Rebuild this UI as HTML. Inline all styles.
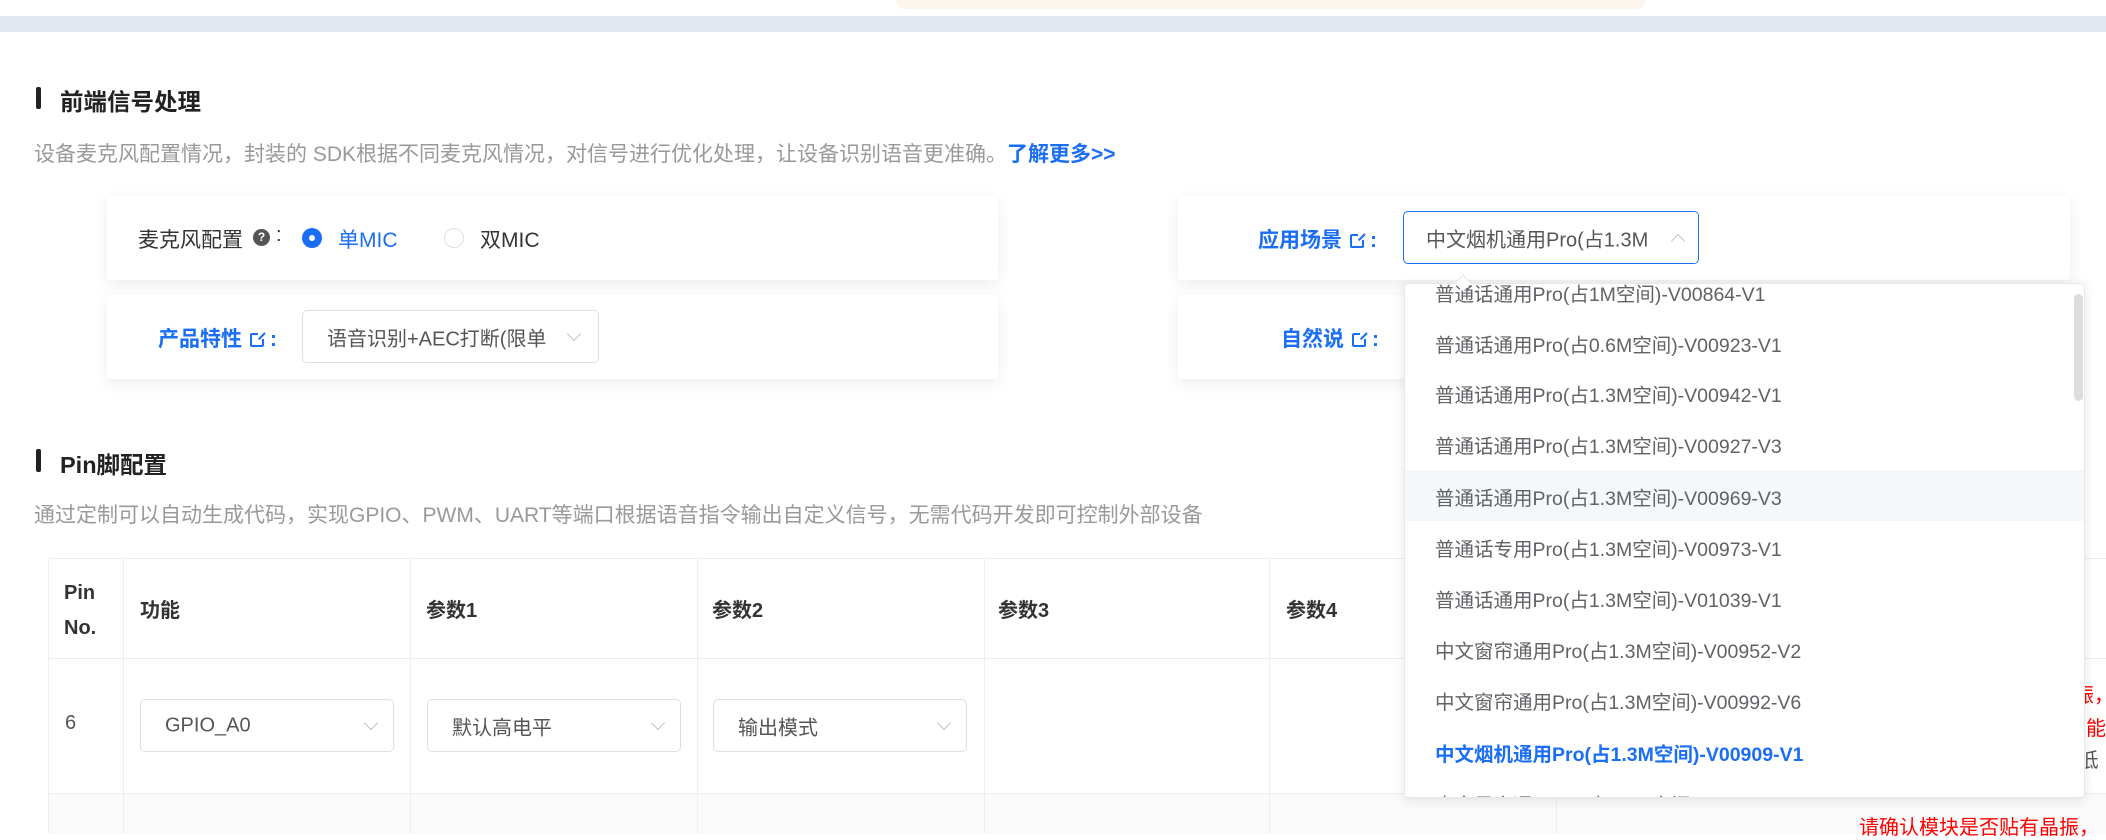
<!DOCTYPE html>
<html><head><meta charset="utf-8"><style>
*{margin:0;padding:0;box-sizing:border-box}
body{width:2106px;height:834px;overflow:hidden;background:#fff;position:relative;font-family:"Liberation Sans","Noto Sans CJK SC",sans-serif;color:#333}
.a{position:absolute;white-space:nowrap}
.card{position:absolute;background:#fff;box-shadow:0 4px 14px rgba(0,0,0,0.08)}
.bar{position:absolute;width:5px;background:#222;border-radius:2px}
.h{font-size:23.5px;font-weight:bold;color:#222}
.d{font-size:21px;color:#999}
.blue{color:#1a6ef5}
.sel{position:absolute;border:1px solid #dcdfe6;border-radius:5px;background:#fff;font-size:20px;color:#555}
.sel span{position:absolute;left:24px;top:50%;transform:translateY(-50%)}
.chev{position:absolute;width:10px;height:10px;border-right:1.3px solid #c0c4cc;border-bottom:1.3px solid #c0c4cc;transform:rotate(45deg)}
.lk{display:inline-block;width:14px;height:14px;border:2px solid #1a6ef5;border-radius:2px;position:relative;vertical-align:-1px;margin:0 6px 0 8px}
.lk:after{content:"";position:absolute;right:-4px;top:-4px;width:8px;height:8px;background:#fff}
.lk:before{content:"";position:absolute;right:-3px;top:-3px;width:9px;height:2px;background:#1a6ef5;transform:rotate(-45deg);transform-origin:right;z-index:1}
.vl{position:absolute;top:558px;height:276px;width:1px;background:#ebeef5}
.it{position:absolute;left:30px;font-size:19.5px;color:#606266;white-space:nowrap}
.red{color:#f00;font-size:20px}
.th{font-size:20px;font-weight:bold}
</style></head><body>
<div class="a" style="left:896px;top:0;width:749px;height:9px;background:#fdf6ec;border-radius:0 0 8px 8px"></div>
<div class="a" style="left:0;top:16px;width:2106px;height:16px;background:#e3e7f0"></div>

<div class="bar" style="left:36px;top:87px;height:22px"></div>
<div class="a h" style="left:60px;top:83px">前端信号处理</div>
<div class="a d" style="left:34px;top:138px">设备麦克风配置情况，封装的 SDK根据不同麦克风情况，对信号进行优化处理，让设备识别语音更准确。<b class="blue">了解更多&gt;&gt;</b></div>

<div class="card" style="left:107px;top:196px;width:891px;height:84px"></div>
<div class="card" style="left:107px;top:295px;width:891px;height:84px"></div>
<div class="card" style="left:1178px;top:196px;width:892px;height:84px"></div>
<div class="card" style="left:1178px;top:295px;width:892px;height:84px"></div>

<div class="a" style="left:138px;top:224px;font-size:21px;color:#333">麦克风配置</div>
<div class="a" style="left:253px;top:229px;width:17px;height:17px;border-radius:50%;background:#555;color:#fff;font-size:12px;font-weight:bold;text-align:center;line-height:17px">?</div>
<div class="a" style="left:276px;top:224px;font-size:20px">:</div>
<div class="a" style="left:302px;top:228px;width:20px;height:20px;border-radius:50%;background:#1a6ef5"><div style="position:absolute;left:7px;top:7px;width:6px;height:6px;border-radius:50%;background:#fff"></div></div>
<div class="a blue" style="left:338px;top:224px;font-size:21px">单MIC</div>
<div class="a" style="left:444px;top:228px;width:20px;height:20px;border-radius:50%;border:1px solid #dcdfe6"></div>
<div class="a" style="left:480px;top:224px;font-size:21px;color:#333">双MIC</div>

<div class="a blue" style="left:158px;top:323px;font-size:21px;font-weight:bold">产品特性<span class="lk"></span>:</div>
<div class="sel" style="left:302px;top:310px;width:297px;height:53px"><span>语音识别+AEC打断(限单</span><div class="chev" style="left:266px;top:18px"></div></div>

<div class="a blue" style="left:1258px;top:224px;font-size:21px;font-weight:bold">应用场景<span class="lk"></span>:</div>
<div class="sel" style="left:1403px;top:211px;width:296px;height:53px;border-color:#1a6ef5;overflow:hidden"><span style="left:22px">中文烟机通用Pro(占1.3M</span><div style="position:absolute;left:250px;top:0;width:45px;height:51px;background:#fff"></div><div class="chev" style="left:269px;top:24px;transform:rotate(225deg)"></div></div>
<div class="a blue" style="left:1281px;top:323px;font-size:21px;font-weight:bold">自然说<span class="lk"></span>:</div>

<div class="bar" style="left:36px;top:449px;height:23px"></div>
<div class="a h" style="left:60px;top:446px">Pin脚配置</div>
<div class="a d" style="left:34px;top:499px">通过定制可以自动生成代码，实现GPIO、PWM、UART等端口根据语音指令输出自定义信号，无需代码开发即可控制外部设备</div>

<div class="a" style="left:48px;top:558px;width:2058px;height:1px;background:#ebeef5"></div>
<div class="a" style="left:48px;top:658px;width:2058px;height:1px;background:#ebeef5"></div>
<div class="a" style="left:48px;top:793px;width:2058px;height:41px;background:#fafafa;border-top:1px solid #ebeef5"></div>
<div class="vl" style="left:48px"></div><div class="vl" style="left:123px"></div><div class="vl" style="left:410px"></div><div class="vl" style="left:697px"></div><div class="vl" style="left:984px"></div><div class="vl" style="left:1269px"></div><div class="vl" style="left:1556px"></div>

<div class="a" style="left:64px;top:576px;font-size:20px;font-weight:bold;line-height:35px;color:#333">Pin<br>No.</div>
<div class="a th" style="left:140px;top:594px">功能</div>
<div class="a th" style="left:426px;top:594px">参数1</div>
<div class="a th" style="left:712px;top:594px">参数2</div>
<div class="a th" style="left:998px;top:594px">参数3</div>
<div class="a th" style="left:1286px;top:594px">参数4</div>

<div class="a" style="left:65px;top:712px;font-size:20px;color:#555">6</div>
<div class="sel" style="left:140px;top:699px;width:254px;height:53px"><span>GPIO_A0</span><div class="chev" style="left:225px;top:18px"></div></div>
<div class="sel" style="left:427px;top:699px;width:254px;height:53px"><span>默认高电平</span><div class="chev" style="left:225px;top:18px"></div></div>
<div class="sel" style="left:713px;top:699px;width:254px;height:53px"><span>输出模式</span><div class="chev" style="left:225px;top:18px"></div></div>

<div class="a red" style="left:2074px;top:679px">振，</div>
<div class="a red" style="left:2066px;top:712px">功能</div>
<div class="a" style="left:2072px;top:744px;font-size:20px;color:#555">)低</div>
<div class="a red" style="left:1859px;top:811px">请确认模块是否贴有晶振，</div>

<div class="a" style="left:1404px;top:283px;width:681px;height:515px;background:#fff;border:1px solid #e4e7ed;border-radius:4px;box-shadow:0 2px 12px rgba(0,0,0,0.1);overflow:hidden">
<div class="a" style="left:0;top:186px;width:681px;height:51px;background:#f5f7fa"></div>
<div class="it" style="top:-6px">普通话通用Pro(占1M空间)-V00864-V1</div>
<div class="it" style="top:45px">普通话通用Pro(占0.6M空间)-V00923-V1</div>
<div class="it" style="top:95px">普通话通用Pro(占1.3M空间)-V00942-V1</div>
<div class="it" style="top:146px">普通话通用Pro(占1.3M空间)-V00927-V3</div>
<div class="it" style="top:198px">普通话通用Pro(占1.3M空间)-V00969-V3</div>
<div class="it" style="top:249px">普通话专用Pro(占1.3M空间)-V00973-V1</div>
<div class="it" style="top:300px">普通话通用Pro(占1.3M空间)-V01039-V1</div>
<div class="it" style="top:351px">中文窗帘通用Pro(占1.3M空间)-V00952-V2</div>
<div class="it" style="top:402px">中文窗帘通用Pro(占1.3M空间)-V00992-V6</div>
<div class="it" style="top:454px;color:#1a6ef5;font-weight:bold">中文烟机通用Pro(占1.3M空间)-V00909-V1</div>
<div class="it" style="top:505px">中文风扇通用Pro(占1.3M空间)-V00924-V1</div>
<div class="a" style="left:669px;top:10px;width:9px;height:107px;border-radius:5px;background:#ddd"></div>
</div>
<div class="a" style="left:1457px;top:277px;width:12px;height:12px;background:#fff;border-left:1px solid #e4e7ed;border-top:1px solid #e4e7ed;transform:rotate(45deg)"></div>
</body></html>
